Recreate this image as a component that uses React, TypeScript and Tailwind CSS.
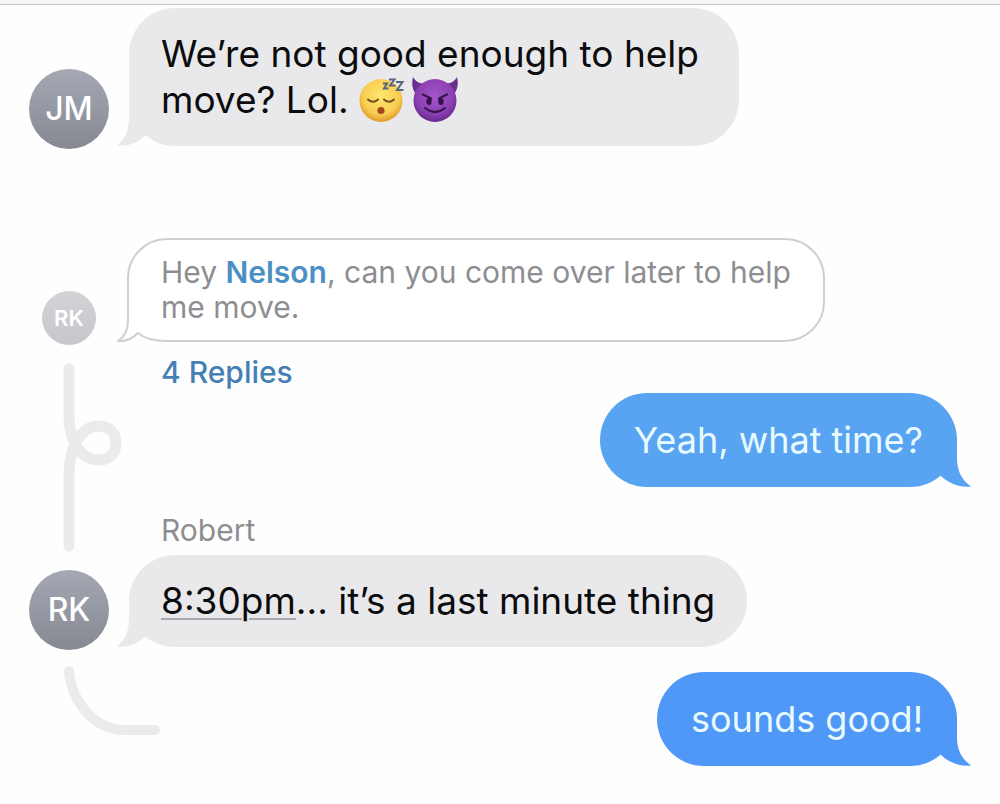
import type { ReactNode } from "react";

function Avatar({ initials, small }: { initials: string; small?: boolean }) {
  return (
    <div className="flex w-20 shrink-0 justify-center">
      {small ? (
        <div className="flex size-[54px] items-center justify-center rounded-full bg-linear-to-b from-[#d2d2d7] to-[#c6c6cb] text-[22px] font-semibold text-white">
          {initials}
        </div>
      ) : (
        <div className="flex size-20 items-center justify-center rounded-full bg-linear-to-b from-[#a4a8b3] to-[#868992] text-[32px] font-medium text-white">
          {initials}
        </div>
      )}
    </div>
  );
}

function Incoming({ children, multiline }: { children: ReactNode; multiline?: boolean }) {
  const inset = multiline ? "pr-10" : "pr-8";
  return (
    <div className={"relative mb-[3px] rounded-[46px] bg-[#e9e9eb] py-[23px] pl-8 text-[37px] leading-[46px] text-[#0c0c0e] " + inset}>
      {children}
      <svg aria-hidden="true" className="absolute bottom-0 -left-3 h-12 w-12 text-[#e9e9eb]" viewBox="0 0 48 48">
        <path fill="currentColor" d="M12 0V18C12 30 10 39 0 47.500C11 49 22 44 29 37L38 20Z" />
      </svg>
    </div>
  );
}

function Outgoing({ children, late }: { children: ReactNode; late?: boolean }) {
  const tone = late ? "bg-[#4f98f7] text-[#4f98f7]" : "bg-[#58a4f3] text-[#58a4f3]";
  return (
    <div className={"relative self-end rounded-[47px] px-[34px] py-6 text-[36px] leading-[46px] " + tone}>
      <span className="text-[#e9fbff]">{children}</span>
      <svg aria-hidden="true" className="absolute -right-4 bottom-0 h-12 w-12" viewBox="0 0 48 48">
        <path fill="currentColor" d="M32 0V18C32 32 36 40 46 47.500C35 49 23 44 16 37L8 20Z" />
      </svg>
    </div>
  );
}

function SleepingFace() {
  return (
    <svg role="img" aria-label="Sleeping face" className="h-[46px] w-[46px]" viewBox="0 0 46 46">
      <defs>
        <radialGradient id="sun" cx="0.5" cy="0.4" r="0.6">
          <stop offset="0" stopColor="#ffe56f" />
          <stop offset="0.7" stopColor="#f8ce50" />
          <stop offset="1" stopColor="#dd9a2c" />
        </radialGradient>
      </defs>
      <circle cx="22" cy="23.500" r="21.500" fill="url(#sun)" />
      <path d="M9 22.500Q14 27 19 22.500M25 22.500Q30 27 35 22.500" fill="none" stroke="#79501d" strokeWidth="2" strokeLinecap="round" />
      <circle cx="22" cy="33.500" r="3.600" fill="#a34a1c" />
      <path d="M24 6.500H28L25 11.500H29.500M30 2.500H35.500L31 8.500H36.500M37 5H43.500L38 13H44.500" fill="none" stroke="#56677c" strokeWidth="2" />
    </svg>
  );
}

function DevilFace() {
  return (
    <svg role="img" aria-label="Smiling face with horns" className="ml-1.5 h-[46px] w-12" viewBox="0 0 48 46">
      <defs>
        <radialGradient id="plum" cx="0.5" cy="0.4" r="0.6">
          <stop offset="0" stopColor="#a456ca" />
          <stop offset="0.7" stopColor="#8b40b2" />
          <stop offset="1" stopColor="#65298a" />
        </radialGradient>
      </defs>
      <path d="M2 0C0 8 2 14 6 18L16 7C9 7 5 5 2 0ZM46 0C48 8 46 14 42 18L32 7C39 7 43 5 46 0Z" fill="#68308c" />
      <circle cx="24" cy="23.500" r="21.500" fill="url(#plum)" />
      <path d="M12 17.500L20 21.500M36 17.500L28 21.500" stroke="#3a154f" strokeWidth="2.200" strokeLinecap="round" />
      <ellipse cx="18" cy="24.500" rx="2.600" ry="3.600" fill="#32104a" />
      <ellipse cx="30" cy="24.500" rx="2.600" ry="3.600" fill="#32104a" />
      <path d="M14 31Q24 39 34 31" fill="none" stroke="#3a154f" strokeWidth="2.200" strokeLinecap="round" />
    </svg>
  );
}

export default function App() {
  return (
    <div className="min-h-screen bg-[#fefefe] font-['Inter','Liberation_Sans',sans-serif]">
      <header className="h-[5px] border-b border-[#c8c8c8] bg-[#f5f5f5]" />
      <main className="pt-[3px] pr-[43px] pb-[38px] pl-[29px]">
        <section className="flex items-end gap-5">
          <Avatar initials="JM" />
          <Incoming multiline>
            <p>We’re not good enough to help</p>
            <p className="flex items-center">
              <span className="mr-2.5">move? Lol.</span>
              <SleepingFace />
              <DevilFace />
            </p>
          </Incoming>
        </section>

        <section className="mt-[89px] flex items-end gap-[18px]">
          <Avatar initials="RK" small />
          <div className="relative mb-[3px] rounded-[40px] border-2 border-[#cfcfd1] bg-white px-8 py-[15px] text-[30px] leading-[35px] text-[#8e8e92]">
            <p>
              Hey <b className="font-semibold text-[#4a90c4]">Nelson</b>, can you come over later to help
            </p>
            <p>me move.</p>
            <svg aria-hidden="true" className="absolute -bottom-0.5 -left-3 h-10 w-14" viewBox="0 0 56 40">
              <path d="M11 0V18C11 29 8 35 2 39C10 40 16 36 21 31Q30 39 50 39L48 34L30 28L16 8Z" fill="#fff" />
              <path d="M11 0V18C11 29 8 35 1 39C10 40 16 36 21 31Q30 39 50 39" fill="none" stroke="#cfcfd1" strokeWidth="2" strokeLinejoin="round" />
            </svg>
          </div>
        </section>

        <section className="flex gap-5">
          <svg aria-hidden="true" className="mt-[18px] h-[190px] w-20 shrink-0 overflow-visible" viewBox="0 0 80 190">
            <path d="M40 6V52C40 82 54 97 70 97C80 97 87 90 87 80C87 70 80 63 70 63C54 63 40 80 40 112V183" fill="none" stroke="#ebebeb" strokeWidth="11" strokeLinecap="round" />
          </svg>
          <div className="flex min-w-0 grow flex-col">
            <a href="#replies" className="mt-2.5 ml-8 self-start text-[30px] leading-[35px] font-medium text-[#457fb5]">
              4 Replies
            </a>
            <div className="mt-[3px] flex flex-col">
              <Outgoing>Yeah, what time?</Outgoing>
            </div>
            <p className="mt-[26px] ml-8 text-[30px] leading-[35px] text-[#8e8e92]">Robert</p>
          </div>
        </section>

        <section className="mt-0.5 flex items-end gap-5">
          <Avatar initials="RK" />
          <Incoming>
            <span className="underline decoration-[#a8a8ad] decoration-2 underline-offset-4">8:30pm</span>... it’s a last minute thing
          </Incoming>
        </section>

        <section className="flex">
          <svg aria-hidden="true" className="mt-[15px] h-[72px] w-[136px] shrink-0" viewBox="0 0 136 72">
            <path d="M40 6C43 38 66 65 96 65H126" fill="none" stroke="#ebebeb" strokeWidth="10" strokeLinecap="round" />
          </svg>
          <div className="mt-[22px] flex grow flex-col">
            <Outgoing late>sounds good!</Outgoing>
          </div>
        </section>
      </main>
    </div>
  );
}
